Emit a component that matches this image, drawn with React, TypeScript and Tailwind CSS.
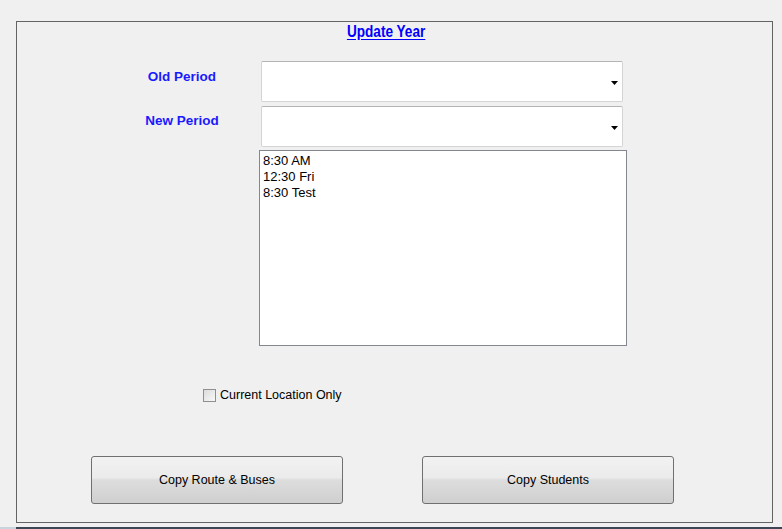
import React from 'react'

const periods = ['8:30 AM', '12:30 Fri', '8:30 Test']

const Combo = () => (
  <div className="relative w-[362px] h-[41px] bg-white border border-[#d4d4d4] border-t-[#b4b4b4] rounded-[2px]">
    <svg className="absolute right-[3px] top-[19px]" width="8" height="5" viewBox="0 0 8 5">
      <path d="M0 0 H7 L3.5 4 Z" fill="#000" />
    </svg>
  </div>
)

const Button = ({ label }: { label: string }) => (
  <button className="w-[252px] h-[48px] rounded-[3px] border border-[#707070] bg-[linear-gradient(#f2f2f2_0%,#ebebeb_45%,#dddddd_50%,#cfcfcf_100%)] text-[12.5px] text-black">
    {label}
  </button>
)

const App = () => {
  return (
    <div
      className="w-[782px] h-[529px] bg-[#f0f0f0] overflow-hidden flex flex-col text-[12px] text-black"
      style={{ fontFamily: '"Liberation Sans", Arial, sans-serif' }}
    >
      <div className="ml-[16px] mt-[21px] w-[757px] h-[502px] border border-[#646464] flex flex-col">
        <div className="h-[17px] mt-[1px] pr-[17px] flex justify-center">
          <span className="inline-block scale-x-[0.85] text-[16px] leading-[17px] font-bold text-[#0000ff] underline underline-offset-[2px]">
            Update Year
          </span>
        </div>

        <div className="mt-[21px] flex">
          <div className="ml-[113px] w-[104px] pt-[6px] text-center text-[13.5px] font-bold text-[#1a1aff]">Old Period</div>
          <div className="ml-[27px]">
            <Combo />
          </div>
        </div>
        <div className="mt-[4px] flex">
          <div className="ml-[113px] w-[104px] pt-[5px] text-center text-[13.5px] font-bold text-[#1a1aff]">New Period</div>
          <div className="ml-[27px]">
            <Combo />
          </div>
        </div>

        <div className="mt-[3px] ml-[242px] w-[368px] h-[196px] bg-white border border-[#828790] pl-[3px] pt-[2px] text-[13px]">
          {periods.map((p) => (
            <div key={p} className="leading-[16px]">{p}</div>
          ))}
        </div>

        <div className="mt-[42px] ml-[186px] flex items-center gap-[4px]">
          <div className="w-[13px] h-[13px] border border-[#8f8f8f] bg-[linear-gradient(135deg,#dcdcdc,#f8f8f8)] p-[2px]">
            <div className="w-full h-full bg-[linear-gradient(135deg,#e0e0e0,#f4f4f4)]" />
          </div>
          <span className="leading-[14px] text-[12.5px]">Current Location Only</span>
        </div>

        <div className="mt-[54px] ml-[74px] flex gap-[79px]">
          <Button label="Copy Route & Buses" />
          <Button label="Copy Students" />
        </div>
      </div>

      <div className="mt-[4px] h-[2px] flex">
        <div className="w-[16px] bg-[#c9d3de]" />
        <div className="flex-1 border-t-2 border-[#3c4654] flex">
          {[36, 54, 42, 50, 44, 46, 44, 42].map((w, i) => (
            <div key={i} style={{ width: w }} className="border-r border-[#9aa8b8]" />
          ))}
        </div>
      </div>
    </div>
  )
}

export default App
